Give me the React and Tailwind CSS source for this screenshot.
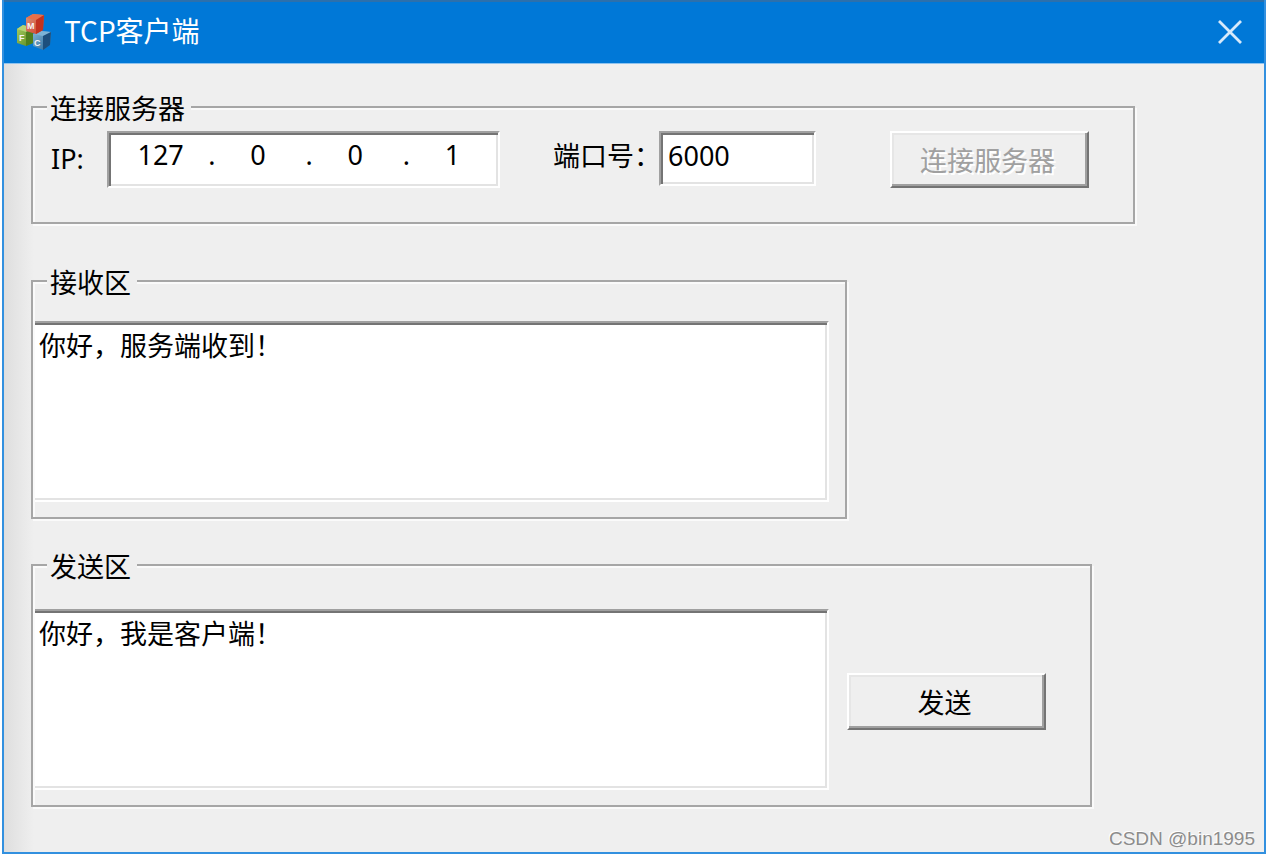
import { useState } from 'react';

// classic Win32 bevels
const SUNKEN =
  'bg-white border-2 border-t-[#a0a0a0] border-l-[#a0a0a0] border-b-white border-r-white shadow-[inset_2px_2px_0_#747474,inset_-2px_-2px_0_#e3e3e3]';
const RAISED =
  'bg-[#efefef] border-2 border-t-white border-l-white border-b-[#747474] border-r-[#747474] shadow-[inset_-2px_-2px_0_#a0a0a0,inset_2px_2px_0_#e6e6e6]';

export default function App() {
  const [ip, setIp] = useState(['127', '0', '0', '1']);
  const [port, setPort] = useState('6000');
  const [received, setReceived] = useState('你好，服务端收到！');
  const [message, setMessage] = useState('你好，我是客户端！');

  const updateOctet = (index, value) => {
    setIp(ip.map((octet, i) => (i === index ? value : octet)));
  };

  return (
    <div className="flex min-h-screen bg-white pl-[2px] pr-1 pb-[2px] font-['Noto_Sans','Noto_Sans_CJK_SC',sans-serif] text-[27px] leading-[30px] text-black">
      <div className="relative flex flex-1 flex-col border-x-2 border-b-2 border-[#3290df] bg-[#efefef]">
        <TitleBar />

        <main className="flex flex-1 flex-col bg-[linear-gradient(to_right,#dedede,#efefef_30px)] pt-[26px] pl-[27px] pb-10">
          <Group title="连接服务器" className="mr-[129px]">
            <div className="mt-[7px] mb-[34px] flex items-start pl-[18px]">
              <label htmlFor="ip-0" className="mt-[13px] w-14 shrink-0">IP:</label>
              <div className={`flex h-[57px] w-[393px] shrink-0 items-start pt-[7px] pr-[2px] pl-2 ${SUNKEN}`}>
                {ip.map((octet, i) => (
                  <Octet key={i} index={i} value={octet} onChange={updateOctet} />
                ))}
              </div>

              <label htmlFor="port" className="mt-[10px] ml-[53px] w-[106px] shrink-0 whitespace-nowrap">端口号：</label>
              <input
                id="port"
                value={port}
                onChange={(e) => setPort(e.target.value)}
                className={`h-[55px] w-[157px] shrink-0 px-[7px] pb-[7px] outline-none ${SUNKEN}`}
              />

              <button
                type="button"
                disabled
                className={`ml-[74px] h-[57px] w-[199px] shrink-0 pt-[2px] pr-1 text-[#a0a0a0] [text-shadow:2px_2px_0_#fff] ${RAISED}`}
              >
                连接服务器
              </button>
            </div>
          </Group>

          <Group title="接收区" className="mt-10 mr-[417px]">
            <div className="mt-[23px] mb-[15px] flex pr-4 pl-[2px]">
              <MessageBox label="接收区" value={received} onChange={setReceived} />
            </div>
          </Group>

          <Group title="发送区" className="mt-[29px] mr-[172px]">
            <div className="mt-[27px] mb-[15px] flex items-center gap-[18px] pr-11 pl-[2px]">
              <MessageBox label="发送区" value={message} onChange={setMessage} />
              <button type="button" className={`mt-1 h-[57px] w-[199px] shrink-0 pt-[2px] pr-1 ${RAISED}`}>
                发送
              </button>
            </div>
          </Group>
        </main>

        <span className="absolute right-[9px] bottom-0 font-['Liberation_Sans',sans-serif] text-[19px] leading-[26px] text-[#8c8c8c] [text-shadow:-1px_-1px_0_#fff]">
          CSDN @bin1995
        </span>
      </div>
    </div>
  );
}

function TitleBar() {
  return (
    <header className="flex h-16 items-center border-t-2 border-b border-t-[#2c70ac] border-b-[#8fc3ee] bg-[#0078d7] pr-[19px] pb-1 pl-3 text-white">
      <CubesIcon />
      <h1 className="ml-3 flex-1 pb-[2px] font-['Noto_Sans_CJK_SC',sans-serif] text-[28px]">TCP客户端</h1>
      <button type="button" aria-label="关闭" className="p-[2px]">
        <svg width="26" height="26" viewBox="0 0 26 26" fill="none" stroke="#d6eafb" strokeWidth="2.8">
          <path d="M2 3L24 25M24 3L2 25" />
        </svg>
      </button>
    </header>
  );
}

function Group({ title, className, children }) {
  return (
    <fieldset className={`border-2 border-[#a6a6a6] shadow-[2px_2px_0_#fafafa,inset_2px_2px_0_#fafafa] ${className}`}>
      <legend className="ml-[14px] bg-[#efefef] pt-1 pr-[6px] pl-[3px]">{title}</legend>
      {children}
    </fieldset>
  );
}

function Octet({ index, value, onChange }) {
  return (
    <>
      {index > 0 && <span className="w-[10px] shrink-0 pl-1 text-center">.</span>}
      <input
        id={`ip-${index}`}
        aria-label={`IP ${index + 1}`}
        value={value}
        maxLength={3}
        onChange={(e) => onChange(index, e.target.value)}
        className="h-[30px] w-0 flex-1 bg-transparent text-center outline-none"
      />
    </>
  );
}

function MessageBox({ label, value, onChange }) {
  return (
    <textarea
      aria-label={label}
      value={value}
      onChange={(e) => onChange(e.target.value)}
      className="h-[181px] w-0 flex-1 resize-none border-y-2 border-r-2 border-t-[#a0a0a0] border-r-white border-b-white bg-white px-1 pt-2 shadow-[inset_0_2px_0_#747474,inset_-2px_-2px_0_#e3e3e3] outline-none"
    />
  );
}

// the three MFC building blocks
function CubesIcon() {
  return (
    <svg width="36" height="38" viewBox="0 -2 36 38">
      <defs>
        <linearGradient id="red" x1="0" y1="0" x2="1" y2="1">
          <stop offset="0" stopColor="#d9967c" />
          <stop offset="1" stopColor="#d23a22" />
        </linearGradient>
        <linearGradient id="green" x1="0" y1="0" x2="1" y2="1">
          <stop offset="0" stopColor="#a9cf62" />
          <stop offset="1" stopColor="#56861e" />
        </linearGradient>
        <linearGradient id="blue" x1="0" y1="0" x2="1" y2="1">
          <stop offset="0" stopColor="#7fb4d6" />
          <stop offset="1" stopColor="#2a6796" />
        </linearGradient>
      </defs>
      <path d="M1 15L7 11L17 14L17 29L10 32L1 29Z" fill="url(#green)" />
      <path d="M1 15L7 11L17 14L10 18Z" fill="#b5d475" />
      <path d="M10 18L17 14L17 29L10 32Z" fill="#4f7f1e" />
      <path d="M17 20L25 17L35 18L34 31L27 36L17 32Z" fill="url(#blue)" />
      <path d="M17 20L25 17L35 18L27 22Z" fill="#7db3d6" />
      <path d="M27 22L35 18L34 31L27 36Z" fill="#1d4f7d" />
      <path d="M10 4L17 0L28 1L27 16L20 20L10 17Z" fill="url(#red)" />
      <path d="M10 4L17 0L28 1L20 6Z" fill="#e8704a" />
      <path d="M20 6L28 1L27 16L20 20Z" fill="#c23320" />
      <g fill="#f5f5f5" fontFamily="Liberation Sans, sans-serif" fontWeight="bold" fontSize="9">
        <text x="11" y="15">M</text>
        <text x="3" y="27">F</text>
        <text x="18" y="32">C</text>
      </g>
    </svg>
  );
}
